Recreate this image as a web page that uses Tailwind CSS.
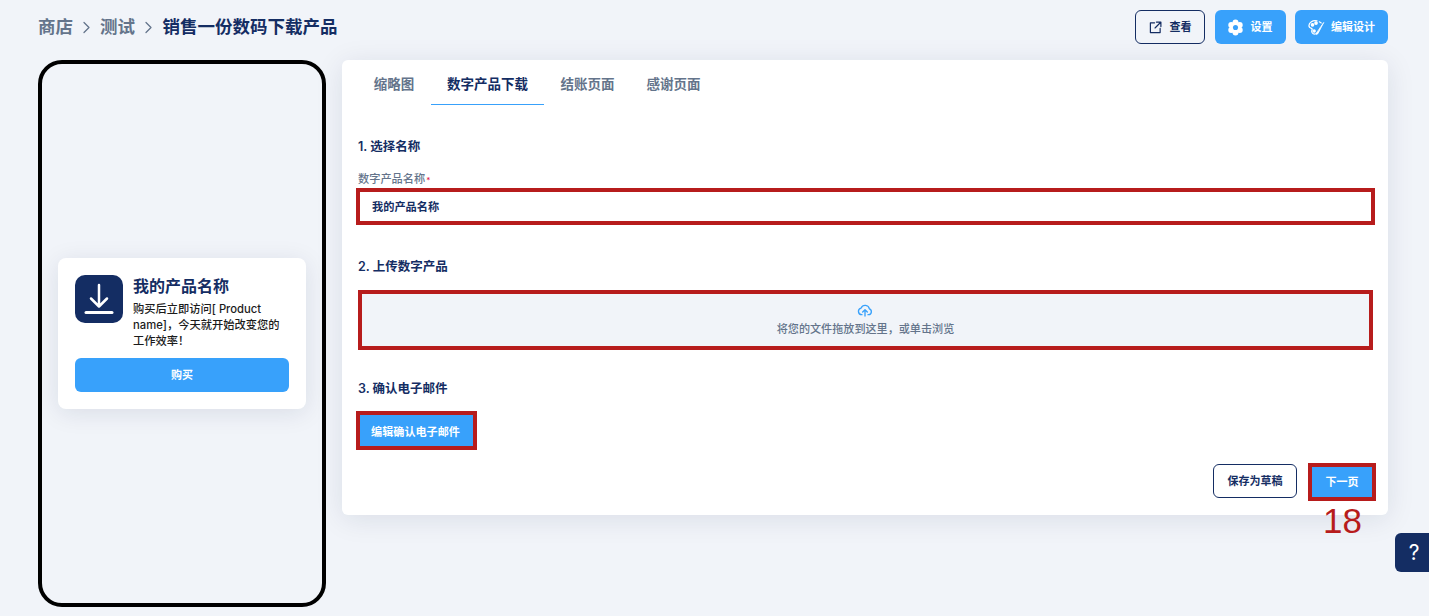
<!DOCTYPE html>
<html lang="zh-CN">
  <head>
    <meta charset="UTF-8">
    <meta name="viewport" content="width=device-width, initial-scale=1.0">
    <title>销售一份数码下载产品</title>
    <script src="https://cdn.jsdelivr.net/npm/@tailwindcss/browser@4"></script>
  </head>
  <body class="relative h-[616px] overflow-hidden bg-[#f1f4f9] font-['Inter','Noto_Sans_CJK_SC',sans-serif] text-[#142d63]">
    <!-- Top bar -->
    <header class="flex h-[60px] items-start justify-between pl-[38px] pr-[41px] pt-[10px]">
      <nav class="flex h-[34px] items-center text-[17.5px] font-semibold leading-none">
        <a class="text-[#64748b]">商店</a>
        <svg class="mx-[6px] size-[15px] text-[#64748b]" viewBox="0 0 24 24" fill="none" stroke="currentColor" stroke-width="2" stroke-linecap="round" stroke-linejoin="round"><path d="M8 4l8 8-8 8"/></svg>
        <a class="text-[#64748b]">测试</a>
        <svg class="ml-[6px] mr-[6.500px] size-[15px] text-[#64748b]" viewBox="0 0 24 24" fill="none" stroke="currentColor" stroke-width="2" stroke-linecap="round" stroke-linejoin="round"><path d="M8 4l8 8-8 8"/></svg>
        <span>销售一份数码下载产品</span>
      </nav>
      <div class="flex">
        <button class="flex h-[34px] w-[70px] items-center justify-center gap-[8px] rounded-md border border-[#142d63] text-[11px] font-semibold">
          <svg class="size-[13px]" viewBox="0 0 14 14" fill="none" stroke="currentColor" stroke-width="1.3" stroke-linecap="round" stroke-linejoin="round"><path d="M6 2H1.500v10.500H12V8M8 1.200h4.800V6M12.600 1.400L6.500 7.500"/></svg>
          查看
        </button>
        <button class="ml-[10px] flex h-[34px] w-[71px] items-center justify-center gap-[7px] rounded-md bg-[#38a1fb] pr-[2px] text-[11px] font-semibold text-white">
          <svg class="size-[17px]" viewBox="2 2 20 20" fill="currentColor"><circle cx="12" cy="12" r="6.500"/><circle cx="12" cy="6.200" r="3.500"/><circle cx="12" cy="17.800" r="3.500"/><circle cx="7" cy="9.100" r="3.500"/><circle cx="17" cy="9.100" r="3.500"/><circle cx="7" cy="14.900" r="3.500"/><circle cx="17" cy="14.900" r="3.500"/><circle cx="12" cy="12" r="3" fill="#38a1fb"/></svg>
          设置
        </button>
        <button class="ml-[9px] flex h-[34px] w-[93px] items-center justify-center gap-[6px] rounded-md bg-[#38a1fb] text-[11px] font-semibold text-white">
          <svg class="size-[17px]" viewBox="0 0 18 18" fill="none" stroke="currentColor" stroke-width="1.300" stroke-linecap="round" stroke-linejoin="round"><path d="M9.500 2C5 1 1 3.500 1 7c0 1.800 1.300 2.600 2.600 2.900 1 .3 1 1 .5 2C3.500 13.500 4.500 16 7 16c1.500 0 2.300-.6 3-1.500"/><path d="M16.500 4L10.500 15.500l-1.500 1 .2-1.800z" fill="currentColor" stroke-width="0.800"/><circle cx="4.800" cy="6.200" r="1.300" fill="currentColor"/><circle cx="8.500" cy="4.300" r="1.300" fill="currentColor"/><circle cx="6.500" cy="12.800" r="1.200" fill="currentColor"/><path d="M12 3l2 1.200"/></svg>
          编辑设计
        </button>
      </div>
    </header>

    <main class="flex items-start gap-4 pl-[38px] pr-[41px]">
      <!-- Phone preview -->
      <section class="flex h-[547px] w-[288px] shrink-0 items-start rounded-[24px] border-4 border-black px-4 pt-[194px]">
        <div class="h-[151px] w-[248px] rounded-lg bg-white p-[17px] shadow-[0_4px_24px_rgba(15,30,70,0.10)]">
          <div class="flex gap-[10px]">
            <div class="flex size-[48px] shrink-0 items-center justify-center rounded-[10px] bg-[#142d63]">
              <svg class="size-[48px]" viewBox="0 0 48 48" fill="none" stroke="white" stroke-width="2.500" stroke-linecap="round" stroke-linejoin="round"><path d="M24 10v21M16 23.500l8 8 8-8"/><path d="M11 37.500h26" stroke-width="3"/></svg>
            </div>
            <div class="min-w-0">
              <h2 class="text-base font-semibold leading-[22px]">我的产品名称</h2>
              <p class="mt-[4px] text-[11.25px] font-medium leading-4 text-[#1b1b1b]">购买后立即访问[ Product name]，今天就开始改变您的工作效率！</p>
            </div>
          </div>
          <button class="mt-[9px] block h-[34px] w-full rounded-md bg-[#38a1fb] text-[11px] font-semibold text-white">购买</button>
        </div>
      </section>

      <!-- Form card -->
      <section class="relative h-[455px] w-[1046px] rounded-md bg-white px-4 shadow-[0_4px_28px_rgba(15,30,70,0.10)]">
        <div class="flex h-[45px] gap-px text-[13.5px] font-semibold">
          <a class="flex w-[72px] items-center justify-center pt-1 text-[#64748b]">缩略图</a>
          <a class="flex w-[113px] items-center justify-center border-b border-[#38a1fb] pt-1">数字产品下载</a>
          <a class="flex w-[85px] items-center justify-center pt-1 text-[#64748b]">结账页面</a>
          <a class="flex w-[85px] items-center justify-center pt-1 text-[#64748b]">感谢页面</a>
        </div>

        <h3 class="mt-[33px] text-[12.5px] font-semibold leading-[18px]">1. 选择名称</h3>
        <label class="mt-[16px] block h-[14px] text-[11.2px] font-medium leading-[14px] text-[#64748b]">数字产品名称<span class="ml-px text-[8px] text-[#e11d48]">*</span></label>
        <div class="-ml-[2px] mt-[2px] flex h-[37px] w-[1019px] items-center border-4 border-[#b71c1c] bg-white pl-[12px] pt-[2px] text-[11.2px] font-semibold">我的产品名称</div>

        <h3 class="mt-[33px] text-[12.5px] font-semibold leading-[18px]">2. 上传数字产品</h3>
        <div class="mt-[14px] flex h-[60px] w-[1015px] flex-col items-center justify-center border-4 border-[#b71c1c] bg-[#f1f4f9] text-[11.1px] font-medium leading-4 text-[#64748b]">
          <svg class="-mt-[2px] size-[16px] -translate-x-px text-[#38a1fb]" viewBox="0 0 24 24" fill="none" stroke="currentColor" stroke-width="2" stroke-linecap="round" stroke-linejoin="round"><path d="M7.500 19H7a5 5 0 0 1-.8-9.900 6.500 6.500 0 0 1 12.400 1.200A4.500 4.500 0 0 1 17.500 19H16.500"/><path d="M12 21v-9M8.500 15l3.500-3.500 3.500 3.500"/></svg>
          <span class="mt-[3px]">将您的文件拖放到这里，或单击浏览</span>
        </div>

        <h3 class="mt-[30px] text-[12.5px] font-semibold leading-[18px]">3. 确认电子邮件</h3>
        <button class="-ml-[2px] mt-[13px] block h-[39px] w-[121px] border-4 border-[#b71c1c] bg-[#38a1fb] pr-[2px] pt-[4px] text-[11.1px] font-semibold text-white">编辑确认电子邮件</button>

        <div class="-mr-1 mt-[13px] flex items-start justify-end gap-[11px]">
          <button class="mt-px h-[34px] w-[84px] rounded-md border border-[#142d63] text-[11px] font-semibold">保存为草稿</button>
          <div class="relative">
            <button class="block h-[38px] w-[68px] border-4 border-[#b71c1c] bg-[#38a1fb] text-[11px] font-semibold text-white">下一页</button>
            <span class="absolute left-[15px] top-[38px] font-['Liberation_Sans',sans-serif] text-[35px] leading-[40px] text-[#b71c1c]">18</span>
          </div>
        </div>
      </section>
    </main>

    <button class="absolute left-[1395px] top-[533px] flex h-[39px] w-[34px] items-center justify-center rounded-l-md bg-[#142d63] pl-[4px] text-[21px] font-normal text-white">?</button>
  </body>
</html>
